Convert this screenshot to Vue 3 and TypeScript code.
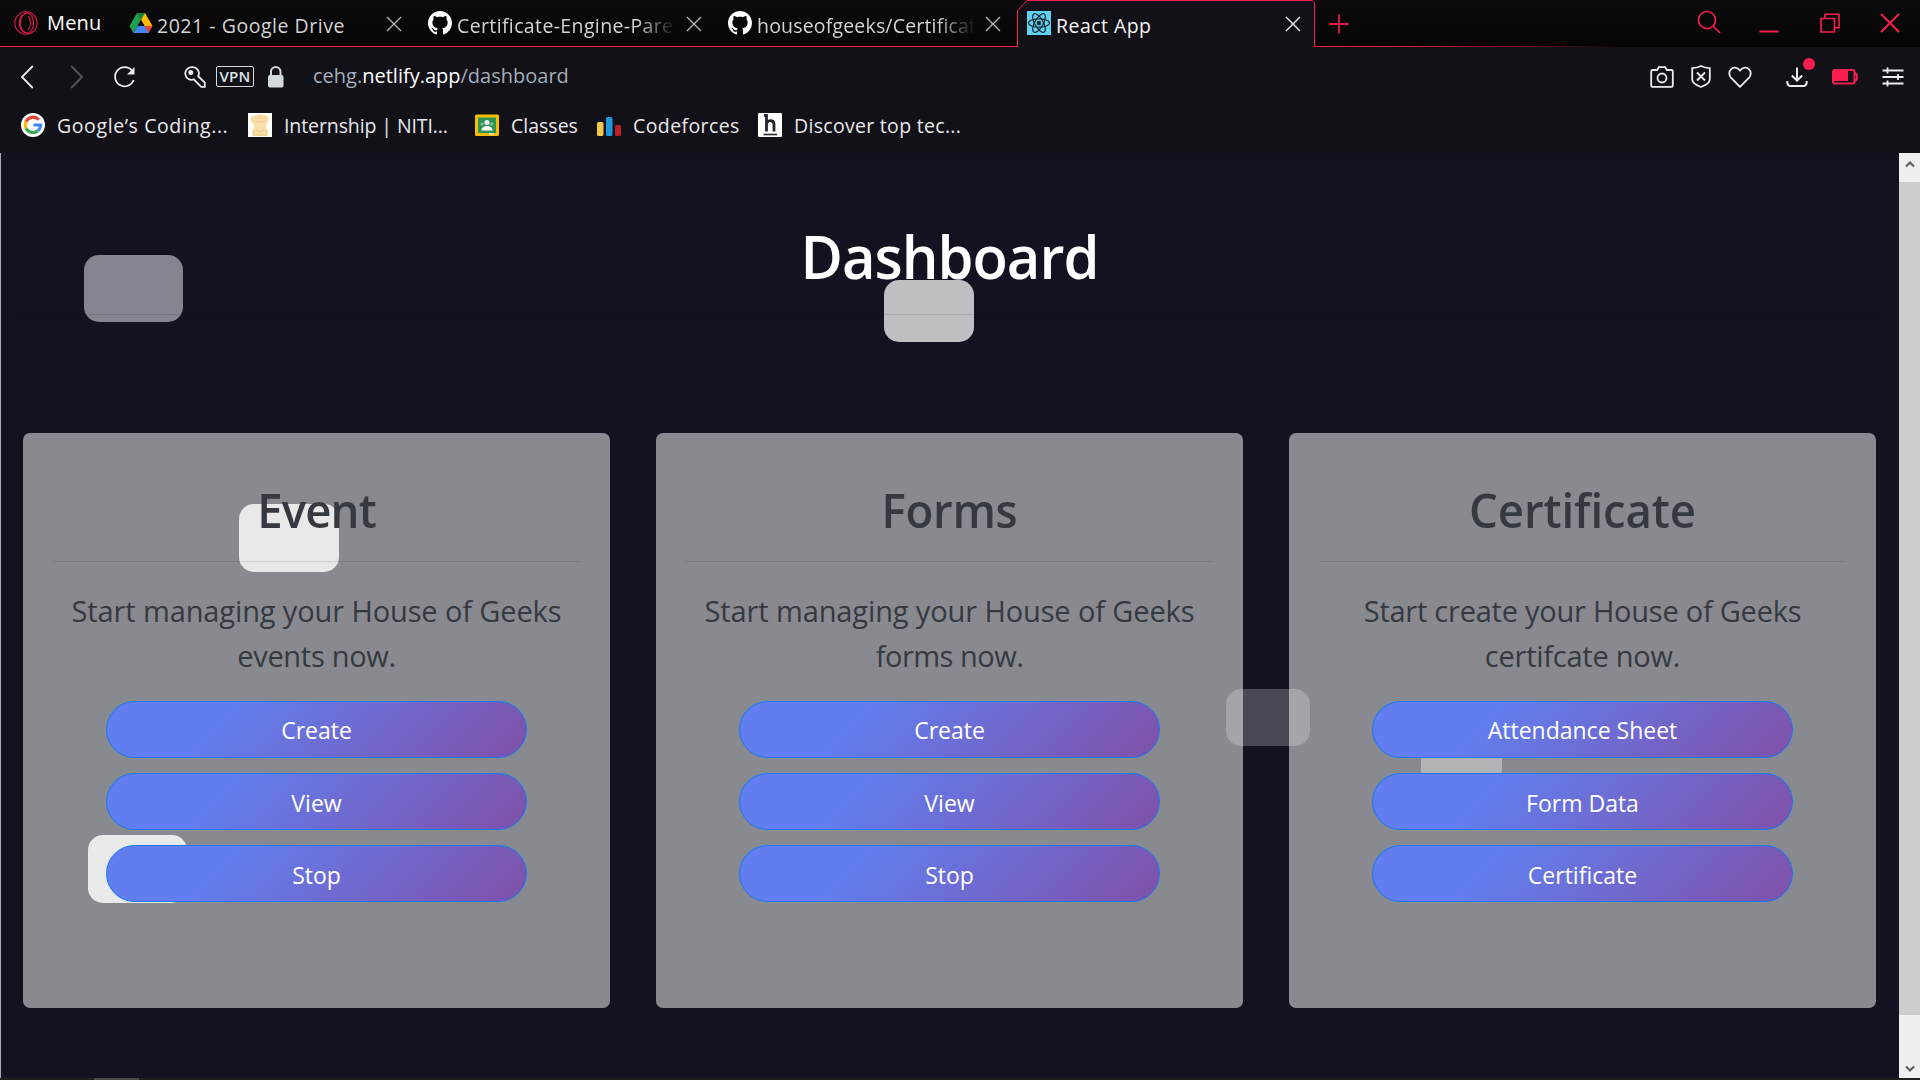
<script setup lang="ts">
interface Bookmark {
  icon: 'google' | 'emblem' | 'classroom' | 'codeforces' | 'hackerearth'
  label: string
  width: number
  spacing: number
}

interface Card {
  title: string
  spacing: number
  lines: { text: string; spacing: number }[]
  actions: string[]
}

interface Square {
  x: number
  y: number
  w: number
  h: number
  color: string
}

const bookmarks: Bookmark[] = [
  { icon: 'google', label: 'Google’s Coding...', width: 227, spacing: 0.6 },
  { icon: 'emblem', label: 'Internship | NITI...', width: 227, spacing: -0.1 },
  { icon: 'classroom', label: 'Classes', width: 122, spacing: 0 },
  { icon: 'codeforces', label: 'Codeforces', width: 161, spacing: 0.4 },
  { icon: 'hackerearth', label: 'Discover top tec...', width: 230, spacing: 0.3 },
]

const cards: Card[] = [
  {
    title: 'Event',
    spacing: -0.9,
    lines: [
      { text: 'Start managing your House of Geeks', spacing: -0.12 },
      { text: 'events now.', spacing: -0.3 },
    ],
    actions: ['Create', 'View', 'Stop'],
  },
  {
    title: 'Forms',
    spacing: -0.3,
    lines: [
      { text: 'Start managing your House of Geeks', spacing: -0.12 },
      { text: 'forms now.', spacing: -0.5 },
    ],
    actions: ['Create', 'View', 'Stop'],
  },
  {
    title: 'Certificate',
    spacing: -0.12,
    lines: [
      { text: 'Start create your House of Geeks', spacing: -0.24 },
      { text: 'certifcate now.', spacing: -0.24 },
    ],
    actions: ['Attendance Sheet', 'Form Data', 'Certificate'],
  },
]

const squares: Square[] = [
  { x: 84, y: 102, w: 99, h: 67, color: '#85848f' },
  { x: 884, y: 127, w: 90, h: 62, color: '#bfbec3' },
  { x: 239, y: 351, w: 100, h: 68, color: '#d1d1d1' },
  { x: 88, y: 682, w: 99, h: 68, color: '#d3d3d3' },
  { x: 1226, y: 536, w: 84, h: 57, color: '#494853' },
  { x: 1421, y: 576, w: 81, h: 56, color: '#67656f' },
]
</script>

<template>
  <div class="browser">
    <header class="tabbar">
      <svg class="tabline" width="1920" height="47" viewBox="0 0 1920 47">
        <defs>
          <linearGradient id="fade" gradientUnits="userSpaceOnUse" x1="1314" y1="0" x2="1620" y2="0">
            <stop offset="0" stop-color="#fa1e4e" />
            <stop offset="0.3" stop-color="#d81c45" />
            <stop offset="1" stop-color="#fa1e4e" stop-opacity="0" />
          </linearGradient>
        </defs>
        <path d="M1017.500 47V10.500L1026.500 .5H1312.500L1314.500 2.500V47Z" fill="#121118" />
        <path d="M0 46.500H1017.500V10.500L1027 .5H1312.500L1314.500 2.500V46" fill="none" stroke="#fa1e4e" />
        <rect x="1314" y="46" width="306" height="1" fill="url(#fade)" />
      </svg>

      <div class="menu">
        <svg width="24" height="24" viewBox="0 0 24 24" fill="none" stroke="#e01b48" stroke-width="1.100">
          <circle cx="12" cy="12" r="11.200" />
          <ellipse cx="13" cy="12" rx="6.600" ry="10" />
          <path d="M13.500 1.500C2.500 5 2.500 19 13.500 22.500" />
          <path d="M14 5C17.500 8.500 17.500 15.500 14 19" />
        </svg>
        <span class="menu-label">Menu</span>
      </div>

      <div class="tab tab-drive">
        <svg class="fav" width="24" height="24" viewBox="0 0 24 24">
          <path d="M8 2h8l7.500 13h-8z" fill="#ffba00" />
          <path d="M8 2l4 7L4.500 22 .5 15z" fill="#1fa050" />
          <path d="M4.500 22l4-7h15l-4 7z" fill="#4285f4" />
          <path d="M23.500 15l-4 7-4-7z" fill="#ea4335" />
          <path d="M8 2h8l-4 7z" fill="#188038" />
          <path d="M12 9l3.500 6h-7z" fill="#0a0a0b" />
        </svg>
        <span class="tab-label drive-label">2021 - Google Drive</span>
        <svg class="cross" width="16" height="16" viewBox="0 0 16 16"><path d="M1 1l14 14M15 1L1 15" /></svg>
      </div>

      <div class="tab tab-git">
        <svg class="fav" width="24" height="24" viewBox="0 0 16 16" fill="#fff">
          <path d="M8 0C3.580 0 0 3.580 0 8c0 3.540 2.290 6.530 5.470 7.590.4.070.55-.17.55-.38 0-.19-.01-.82-.01-1.490-2.010.37-2.530-.49-2.690-.94-.09-.23-.48-.94-.82-1.130-.28-.15-.68-.52-.01-.53.63-.01 1.080.58 1.230.82.72 1.210 1.870.87 2.330.66.07-.52.28-.87.51-1.070-1.780-.2-3.640-.89-3.640-3.950 0-.87.31-1.590.82-2.150-.08-.2-.36-1.020.08-2.120 0 0 .67-.21 2.200.82.64-.18 1.320-.27 2-.27s1.360.09 2 .27c1.530-1.040 2.200-.82 2.200-.82.44 1.100.16 1.920.08 2.120.51.56.82 1.270.82 2.150 0 3.070-1.870 3.750-3.650 3.950.29.25.54.73.54 1.480 0 1.070-.01 1.930-.01 2.200 0 .21.15.46.55.38A8.010 8.010 0 0 0 16 8c0-4.420-3.580-8-8-8z" />
        </svg>
        <span class="tab-label faded engine-label">Certificate-Engine-Paren</span>
        <svg class="cross" width="16" height="16" viewBox="0 0 16 16"><path d="M1 1l14 14M15 1L1 15" /></svg>
      </div>

      <div class="tab tab-house">
        <svg class="fav" width="24" height="24" viewBox="0 0 16 16" fill="#fff">
          <path d="M8 0C3.580 0 0 3.580 0 8c0 3.540 2.290 6.530 5.470 7.590.4.070.55-.17.55-.38 0-.19-.01-.82-.01-1.490-2.010.37-2.530-.49-2.690-.94-.09-.23-.48-.94-.82-1.130-.28-.15-.68-.52-.01-.53.63-.01 1.080.58 1.230.82.72 1.210 1.870.87 2.330.66.07-.52.28-.87.51-1.070-1.780-.2-3.640-.89-3.640-3.950 0-.87.31-1.590.82-2.150-.08-.2-.36-1.020.08-2.120 0 0 .67-.21 2.200.82.64-.18 1.320-.27 2-.27s1.360.09 2 .27c1.530-1.040 2.200-.82 2.200-.82.44 1.100.16 1.920.08 2.120.51.56.82 1.270.82 2.150 0 3.070-1.870 3.750-3.650 3.950.29.25.54.73.54 1.480 0 1.070-.01 1.930-.01 2.200 0 .21.15.46.55.38A8.010 8.010 0 0 0 16 8c0-4.420-3.580-8-8-8z" />
        </svg>
        <span class="tab-label faded house-label">houseofgeeks/Certificate</span>
        <svg class="cross" width="16" height="16" viewBox="0 0 16 16"><path d="M1 1l14 14M15 1L1 15" /></svg>
      </div>

      <div class="tab tab-react">
        <svg class="fav" width="24" height="24" viewBox="0 0 24 24" fill="none" stroke="#1d2a33" stroke-width="1.200">
          <rect width="24" height="24" fill="#5fd3f3" stroke="none" />
          <ellipse cx="12" cy="12" rx="10.500" ry="4.200" />
          <ellipse cx="12" cy="12" rx="10.500" ry="4.200" transform="rotate(60 12 12)" />
          <ellipse cx="12" cy="12" rx="10.500" ry="4.200" transform="rotate(120 12 12)" />
          <circle cx="12" cy="12" r="2.200" fill="#1d2a33" stroke="none" />
        </svg>
        <span class="tab-label react-label">React App</span>
        <svg class="cross" width="16" height="16" viewBox="0 0 16 16"><path d="M1 1l14 14M15 1L1 15" /></svg>
      </div>

      <svg class="plus" width="20" height="20" viewBox="0 0 20 20"><path d="M10 .5v19M.5 10h19" /></svg>

      <div class="window-buttons">
        <svg width="24" height="24" viewBox="0 0 24 24"><circle cx="10" cy="10" r="8.500" /><path d="M16 16l7 7" /></svg>
        <svg width="20" height="20" viewBox="0 0 20 20"><path d="M.5 18.500h19" stroke-width="2" /></svg>
        <svg width="20" height="20" viewBox="0 0 20 20"><path d="M1 5.500h13.500V19H1zM5 5.500V1.200h14v13.500h-4.500" /></svg>
        <svg width="20" height="20" viewBox="0 0 20 20"><path d="M1 1l18 18M19 1L1 19" stroke-width="1.900" /></svg>
      </div>
    </header>

    <div class="toolbar">
      <svg class="back" width="14" height="24" viewBox="0 0 14 24"><path d="M12.800 1L2 12l10.800 11" /></svg>
      <svg class="forward" width="14" height="24" viewBox="0 0 14 24"><path d="M1.200 1L12 12 1.200 23" /></svg>
      <svg class="reload" width="24" height="24" viewBox="0 0 24 24">
        <path d="M19 5.500A9.600 9.600 0 1 0 20.700 15" />
        <path d="M21.500 2v7.500H14z" fill="#e8edf0" stroke="none" />
      </svg>
      <svg class="key" width="22" height="22" viewBox="0 0 22 22">
        <path d="M7.500 1.200a6.300 6.300 0 1 0 2.300 12.200l7.400 7.400h3.600v-4.200l-6.600-6.400A6.300 6.300 0 0 0 7.500 1.200z" />
        <circle cx="6.800" cy="6.500" r="1.600" fill="#e8edf0" />
      </svg>
      <span class="vpn">VPN</span>
      <svg class="lock" width="16" height="22" viewBox="0 0 16 22">
        <rect x="0" y="9" width="15.500" height="12.500" rx="2" fill="#d3d9dc" stroke="none" />
        <path d="M3 10V5.800a4.750 4.750 0 0 1 9.500 0V10" stroke="#d3d9dc" stroke-width="2" />
      </svg>
      <span class="url">cehg.<b>netlify.app</b>/dashboard</span>

      <div class="tools">
        <svg class="camera" width="24" height="22" viewBox="0 0 24 22">
          <path d="M2.500 4h4.700l1.600-2.800h6.400L16.800 4h4.700a1.300 1.300 0 0 1 1.300 1.300v14.200a1.300 1.300 0 0 1-1.300 1.300h-19a1.300 1.300 0 0 1-1.300-1.300V5.300A1.300 1.300 0 0 1 2.500 4z" />
          <circle cx="12" cy="12" r="4.500" />
        </svg>
        <svg class="shield" width="20" height="23" viewBox="0 0 20 23">
          <path d="M10 1C7 2.500 4 3 1.200 3.200v11C1.200 18 6 20.500 10 22c4-1.500 8.800-4 8.800-7.800v-11C16 3 13 2.500 10 1z" />
          <path d="M6 7.500l8 8M14 7.500l-8 8" />
        </svg>
        <svg class="heart" width="24" height="22" viewBox="0 0 24 22">
          <path d="M12 20.800L3.200 12C-2.500 5.500 6-2.800 12 4.500 18-2.800 26.500 5.500 20.800 12z" />
        </svg>
        <span class="download">
          <svg width="22" height="20" viewBox="0 0 22 20">
            <path d="M11 .5v13M5.800 8.500L11 13.500l5.200-5M1.200 14c0 3.500 1 5 3.500 5h12.600c2.500 0 3.500-1.500 3.500-5" stroke-width="2" />
          </svg>
          <i class="dot"></i>
        </span>
        <svg class="battery" width="26" height="16" viewBox="0 0 26 16">
          <rect x="1" y="1" width="21.500" height="13.500" rx="2" stroke="#fa1e4e" stroke-width="2" />
          <rect x="2" y="2" width="14" height="10" fill="#fa1e4e" stroke="none" />
          <path d="M23 4l1.800 1.500v5L23 12" stroke="#fa1e4e" />
        </svg>
        <svg class="sliders" width="22" height="20" viewBox="0 0 22 20">
          <path d="M.5 3.500h21M.5 10h21M.5 16.500h21M5.500.5v6M16 7v6M5.500 13.500v6" stroke-width="1.800" />
        </svg>
      </div>
    </div>

    <nav class="bookmarks">
      <div v-for="b in bookmarks" :key="b.label" class="bookmark" :style="{ width: b.width + 'px' }">
        <svg v-if="b.icon === 'google'" width="24" height="24" viewBox="0 0 24 24">
          <circle cx="12" cy="12" r="12" fill="#fff" />
          <g fill="none" stroke-width="3.200">
            <path d="M17.800 6.800A7.700 7.700 0 0 0 5.100 8.600" stroke="#ea4335" />
            <path d="M5.100 8.600a7.700 7.700 0 0 0 0 6.900" stroke="#fbbc05" />
            <path d="M5.100 15.500a7.700 7.700 0 0 0 11.700 2.200" stroke="#34a853" />
            <path d="M16.800 17.700A7.600 7.600 0 0 0 19.600 12H12.500" stroke="#4285f4" />
          </g>
        </svg>
        <svg v-else-if="b.icon === 'emblem'" width="24" height="24" viewBox="0 0 24 24">
          <rect width="24" height="24" fill="#fffdf8" />
          <path d="M5 3c3-2 11-2 14 0 3 1 2 5 .5 6.500L18 12v3l2 2.500V21l-1 2H5l-1-2v-3.500L6 15v-3L4 9.500C2 8 2 4 5 3z" fill="#f8dfa9" />
          <path d="M7 4.500c2 1 3 1 5-.5 2 1.500 3 1.500 5 .5M6 8c2 1 4 1 6 0 2 1 4 1 6 0M5 19c2-2 4-2 7 0 3-2 5-2 7 0M5 22h14" stroke="#eec98a" fill="none" stroke-width="1" />
        </svg>
        <svg v-else-if="b.icon === 'classroom'" width="24" height="24" viewBox="0 0 24 24">
          <rect y="1.500" width="24" height="21.500" rx="1.500" fill="#fbbc04" />
          <rect x="3" y="4.500" width="18" height="15.500" fill="#2f9455" />
          <circle cx="12" cy="9.500" r="2.500" fill="#fff" />
          <circle cx="7.200" cy="11" r="1.500" fill="#86c79c" />
          <circle cx="16.800" cy="11" r="1.500" fill="#86c79c" />
          <path d="M6.500 17.500c0-6 11-6 11 0z" fill="#fff" />
          <path d="M14 20h5v1.500h-5z" fill="#e8eaed" />
        </svg>
        <svg v-else-if="b.icon === 'codeforces'" width="24" height="24" viewBox="0 0 24 24">
          <rect x="0" y="9" width="6.500" height="14" rx="1.500" fill="#f5c84c" />
          <rect x="9" y="4" width="6.500" height="19" rx="1.500" fill="#2196d9" />
          <rect x="18" y="12" width="6" height="11" rx="1.500" fill="#c0202b" />
        </svg>
        <svg v-else width="24" height="24" viewBox="0 0 24 24">
          <rect width="24" height="24" rx="1" fill="#fff" />
          <path d="M6 2.500h2.500V18.500M8.500 10c2-3.500 7.500-3 7.500 1.500v7" fill="none" stroke="#22242e" stroke-width="2.800" />
          <path d="M5.500 21.500h13.500" stroke="#22242e" stroke-width="1.600" />
        </svg>
        <span class="bookmark-label" :style="{ letterSpacing: b.spacing + 'px' }">{{ b.label }}</span>
      </div>
    </nav>

    <div class="viewport">
      <main class="page">
        <div class="squares">
          <i
            v-for="s in squares"
            :key="s.x"
            class="square"
            :style="{ left: s.x + 'px', top: s.y + 'px', width: s.w + 'px', height: s.h + 'px', background: s.color }"
          ></i>
        </div>
        <h1>Dashboard</h1>
        <hr class="rule" />
        <div class="cards">
          <section v-for="card in cards" :key="card.title" class="card">
            <h2 :style="{ letterSpacing: card.spacing + 'px' }">{{ card.title }}</h2>
            <hr />
            <p>
              <span v-for="l in card.lines" :key="l.text" :style="{ letterSpacing: l.spacing + 'px' }">{{ l.text }}</span>
            </p>
            <div class="actions">
              <button v-for="a in card.actions" :key="a" type="button">{{ a }}</button>
            </div>
          </section>
        </div>
      </main>
      <aside class="scrollbar">
        <svg width="10" height="8" viewBox="0 0 10 8"><path d="M1 6.500l4-4 4 4" /></svg>
        <div class="thumb"></div>
        <svg class="down" width="10" height="8" viewBox="0 0 10 8"><path d="M1 1.500l4 4 4-4" /></svg>
      </aside>
    </div>
    <footer class="edge"><i></i></footer>
  </div>
</template>

<style>
html,
body {
  margin: 0;
  overflow: hidden;
  background: #131220;
}
</style>

<style scoped>
.browser {
  display: flex;
  flex-direction: column;
  width: 1920px;
  height: 1080px;
  overflow: hidden;
  background: #121118;
  font-family: "Open Sans", "Noto Sans", sans-serif;
  white-space: nowrap;
}

svg {
  display: block;
  flex: none;
}

/* Tab bar */
.tabbar {
  position: relative;
  display: flex;
  align-items: center;
  height: 46px;
  padding-bottom: 1px;
  background: linear-gradient(#0b0b0d, #050506);
}
.tabline {
  position: absolute;
  left: 0;
  top: 0;
}
.menu {
  position: relative;
  display: flex;
  align-items: center;
  width: 115px;
  padding-left: 14px;
}
.menu-label {
  margin: -2px 0 0 9px;
  color: #fff;
  font-size: 20px;
  letter-spacing: 0.17px;
}
.tab {
  position: relative;
  display: flex;
  align-items: center;
}
.fav {
  margin-right: 5px;
}
.tab-label {
  overflow: hidden;
  padding-top: 5px;
  color: #d3d3d4;
  font-size: 19.5px;
}
.tab-drive {
  width: 299px;
}
.drive-label {
  width: 229px;
  margin-left: -1px;
  letter-spacing: 0.53px;
}
.tab-git {
  width: 300px;
}
.engine-label {
  width: 219px;
  margin-right: 10px;
  letter-spacing: 0.37px;
}
.tab-house {
  width: 299px;
}
.house-label {
  width: 219px;
  margin-right: 9px;
  letter-spacing: 0.18px;
}
.faded {
  mask-image: linear-gradient(90deg, #000 82%, transparent);
}
.tab-react {
  width: 302px;
}
.react-label {
  width: 229px;
  color: #f4f4f5;
  letter-spacing: 0.45px;
}
.cross {
  margin-top: 2px;
  fill: none;
  stroke: #b5b5b7;
  stroke-width: 1.4;
}
.tab-react .cross {
  stroke: #f0f0f2;
}
.plus {
  position: relative;
  margin-top: 1px;
  fill: none;
  stroke: #e01b48;
  stroke-width: 1.8;
}
.window-buttons {
  position: relative;
  display: flex;
  align-items: center;
  margin-left: 348px;
  fill: none;
  stroke: #fa1e4e;
  stroke-width: 1.6;
}
.window-buttons svg:nth-child(1) {
  margin-top: -3px;
}
.window-buttons svg:nth-child(2) {
  margin: -1px 0 0 38px;
}
.window-buttons svg:nth-child(3) {
  margin: 0 40px 0 41px;
}

/* Address bar */
.toolbar {
  display: flex;
  align-items: center;
  height: 59px;
  fill: none;
  stroke: #e8edf0;
  stroke-width: 1.8;
}
.back {
  margin-left: 20px;
}
.forward {
  margin-left: 36px;
  stroke: #55555c;
}
.reload {
  margin-left: 29px;
}
.key {
  margin-left: 47px;
}
.vpn {
  width: 36px;
  height: 19px;
  margin-left: 10px;
  border: 1px solid #d3d9dc;
  border-radius: 2px;
  color: #dfe4e7;
  font: 600 15px/19px "Open Sans", sans-serif;
  letter-spacing: 0.3px;
  text-align: center;
}
.lock {
  margin-left: 14px;
}
.url {
  margin: -3px 0 0 29px;
  color: #a4adba;
  font-size: 20px;
}
.url b {
  color: #fff;
  font-weight: 400;
}
.tools {
  display: flex;
  align-items: center;
  margin-left: auto;
  padding-right: 16px;
}
.shield {
  margin-left: 17px;
}
.heart {
  margin-left: 17px;
}
.download {
  position: relative;
  margin-left: 34px;
}
.dot {
  position: absolute;
  left: 17px;
  top: -9px;
  width: 12px;
  height: 12px;
  border-radius: 50%;
  background: #fa1e4e;
}
.battery {
  margin-left: 24px;
}
.sliders {
  margin-left: 24px;
}

/* Bookmarks */
.bookmarks {
  display: flex;
  height: 38px;
  padding: 0 0 9px 21px;
}
.bookmark {
  display: flex;
  align-items: center;
}
.bookmark-label {
  margin-left: 12px;
  color: #e9e9eb;
  font-size: 19.5px;
}

/* Page */
.viewport {
  display: flex;
  height: 925px;
}
.page {
  position: relative;
  z-index: 0;
  box-sizing: border-box;
  width: 1899px;
  padding: 63px 23px 0 22px;
  border-left: 1px solid #a9a9ad;
  background: #131220;
}
.squares {
  position: absolute;
  inset: 0 0 0 -1px;
  z-index: -1;
}
.square {
  position: absolute;
  border-radius: 15px;
}
h1 {
  margin: 0;
  color: #fff;
  font-size: 60px;
  font-weight: 600;
  line-height: 80px;
  letter-spacing: -1.05px;
  text-align: center;
  transform: scaleX(0.965);
}
hr {
  height: 1px;
  margin: 0;
  border: 0;
  background: rgba(0, 0, 0, 0.1);
}
.rule {
  margin: 18px 0 118px;
}
.cards {
  display: flex;
  gap: 46px;
}
.card {
  box-sizing: border-box;
  flex: 1;
  height: 575px;
  padding: 48px 30px 0;
  border-radius: 7px;
  background: rgba(255, 255, 255, 0.5);
  color: #343a40;
  text-align: center;
}
h2 {
  margin: 0 0 22px;
  font-size: 47px;
  font-weight: 600;
  line-height: 58px;
  transform: scaleX(0.97);
}
p {
  margin: 26px 0 23px;
  font-size: 29px;
  line-height: 45px;
}
p span {
  display: block;
}
.actions {
  display: flex;
  flex-direction: column;
  gap: 15px;
  padding: 0 53px;
}
button {
  box-sizing: border-box;
  height: 57px;
  padding: 1px 0 0;
  border: 1px solid #0f7bfa;
  border-radius: 29px;
  background: linear-gradient(135deg, #627eee 28%, #8050a8 100%);
  color: #fff;
  font: 400 23px/54px "Open Sans", "Noto Sans", sans-serif;
}
button:not(:first-child) {
  line-height: 56px;
}

/* Scrollbar */
.scrollbar {
  display: flex;
  flex-direction: column;
  align-items: center;
  width: 21px;
  background: #f0f0f0;
  fill: none;
  stroke: #606060;
  stroke-width: 2.2;
}
.scrollbar svg {
  margin-top: 7px;
}
.thumb {
  width: 21px;
  height: 833px;
  margin-top: 14px;
  background: #cdcdcd;
}
.scrollbar .down {
  margin-top: 50px;
}
.edge {
  height: 2px;
  background: #202020;
}
.edge i {
  display: block;
  width: 45px;
  height: 2px;
  margin-left: 94px;
  background: #4a4a4a;
}
</style>
